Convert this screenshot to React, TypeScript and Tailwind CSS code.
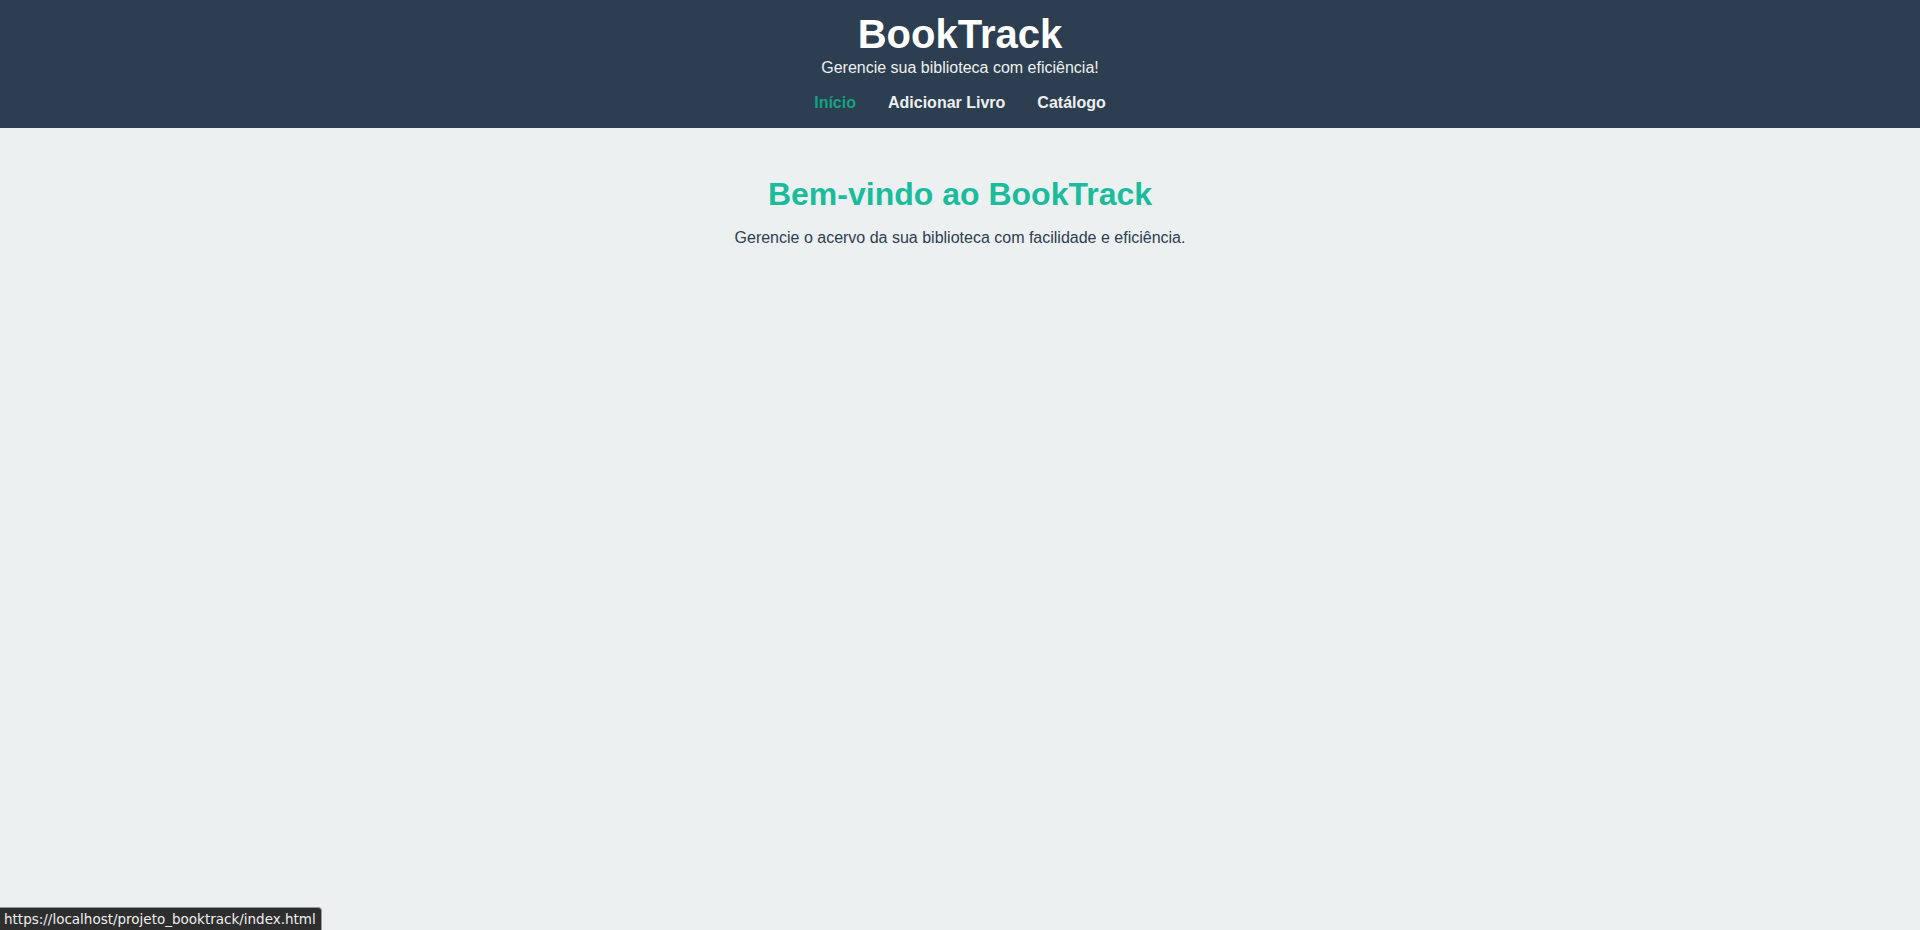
export default function App() {
  return (
    <div className="min-h-[930px] bg-[#ecf0f1] font-['Liberation_Sans',Arial,sans-serif]">
      {/* Header */}
      <header className="bg-[#2c3e50] pt-[11px] pb-[16px] text-center text-white">
        <h1 className="text-[40px] leading-[46px] font-bold">BookTrack</h1>
        <p className="mt-[2px] text-[16px] leading-[18px] text-[#ecf0f1]">
          Gerencie sua biblioteca com eficiência!
        </p>
        <nav className="mt-[17px] flex justify-center gap-8 text-[16px] leading-[18px] font-bold">
          <a href="#" className="text-[#16a085]">Início</a>
          <a href="#" className="text-[#ecf0f1]">Adicionar Livro</a>
          <a href="#" className="text-[#ecf0f1]">Catálogo</a>
        </nav>
      </header>

      {/* Main */}
      <main className="pt-[48px] text-center">
        <h2 className="text-[32px] leading-[37px] font-bold text-[#1abc9c]">
          Bem-vindo ao BookTrack
        </h2>
        <p className="mt-4 text-[16px] leading-[18px] text-[#2c3e50]">
          Gerencie o acervo da sua biblioteca com facilidade e eficiência.
        </p>
      </main>

      {/* Link hover status */}
      <div className="fixed bottom-0 left-0 h-[23px] w-[322px] rounded-tr-[4px] border-t border-r border-[#9a9a9a] bg-[#2e2e2e] pl-[4px] text-[13.5px] leading-[22px] text-[#eeeeee] font-['DejaVu_Sans',sans-serif]">
        https://localhost/projeto_booktrack/index.html
      </div>
    </div>
  );
}
